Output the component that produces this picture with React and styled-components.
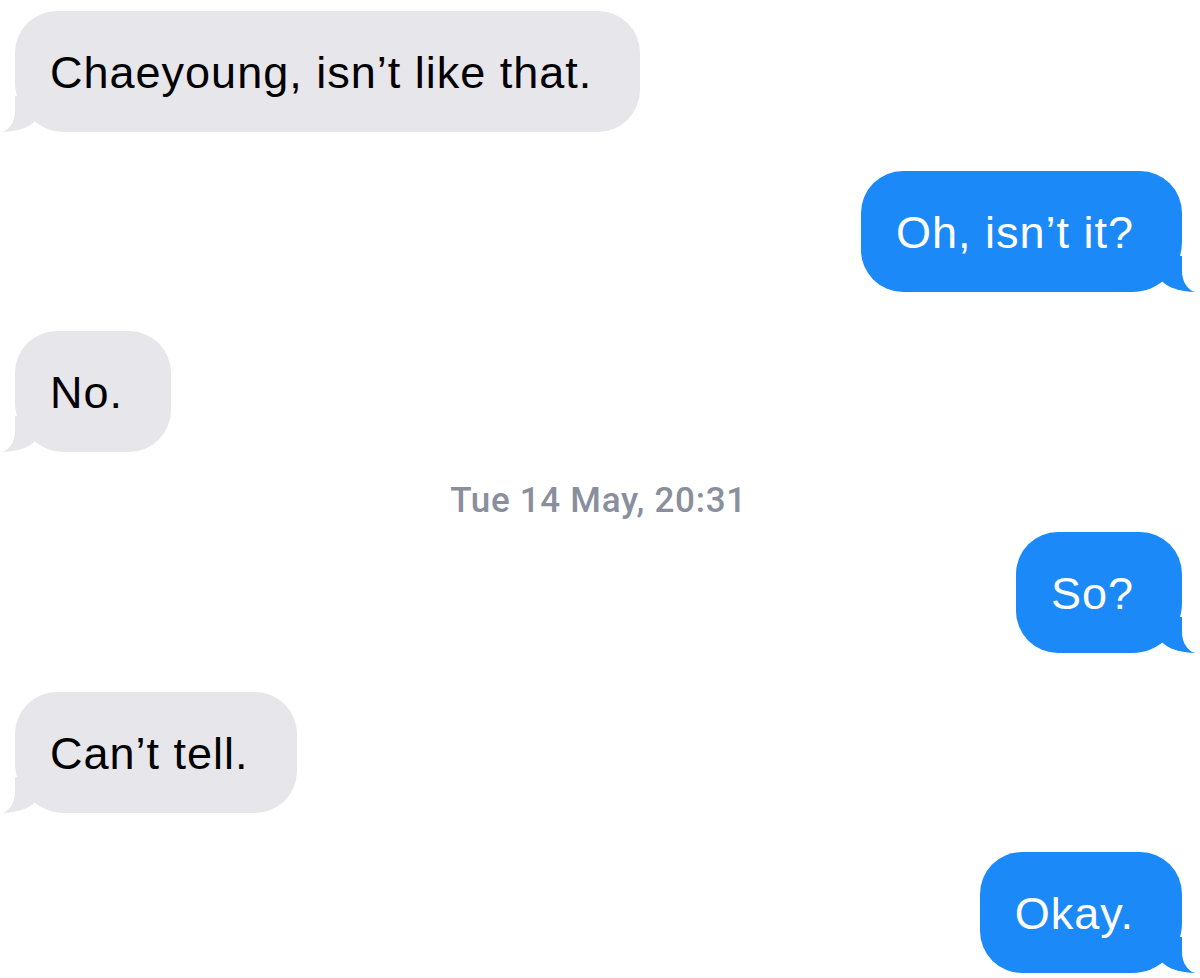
import React from "react";
import styled, { createGlobalStyle, css } from "styled-components";

const GlobalStyle = createGlobalStyle`
  html, body {
    margin: 0;
    padding: 0;
    background: #ffffff;
  }
  body {
    font-family: "Liberation Sans", Arial, sans-serif;
    -webkit-font-smoothing: antialiased;
  }
`;

const BLUE = "#1b8af8";
const GRAY = "#e6e6eb";

const Thread = styled.div`
  display: flex;
  flex-direction: column;
  padding: 11px 18px 0 15px;
  width: 1200px;
  box-sizing: border-box;
`;

const Row = styled.div`
  display: flex;
  justify-content: ${(p) => (p.$me ? "flex-end" : "flex-start")};
  margin-bottom: ${(p) => (p.$tight ? 0 : 39)}px;
`;

const tailRight = css`
  border-bottom-right-radius: 50px;
  &::before {
    content: "";
    position: absolute;
    bottom: 0;
    right: -15px;
    width: 37px;
    height: 36px;
    background: ${BLUE};
    border-bottom-left-radius: 37px 16px;
  }
  &::after {
    content: "";
    position: absolute;
    bottom: 0;
    right: -30px;
    width: 30px;
    height: 36px;
    background: #ffffff;
    border-bottom-left-radius: 15px 21px;
  }
`;

const tailLeft = css`
  border-bottom-left-radius: 50px;
  &::before {
    content: "";
    position: absolute;
    bottom: 0;
    left: -15px;
    width: 37px;
    height: 36px;
    background: ${GRAY};
    border-bottom-right-radius: 37px 16px;
  }
  &::after {
    content: "";
    position: absolute;
    bottom: 0;
    left: -30px;
    width: 30px;
    height: 36px;
    background: #ffffff;
    border-bottom-right-radius: 15px 21px;
  }
`;

const Bubble = styled.div`
  position: relative;
  box-sizing: border-box;
  height: 121px;
  padding: 35px 48px 32px 35px;
  border-radius: 42px;
  background: ${(p) => (p.$me ? BLUE : GRAY)};
  color: ${(p) => (p.$me ? "#ffffff" : "#000000")};
  font-family: "Liberation Sans", Arial, sans-serif;
  font-size: 45px;
  line-height: 54px;
  letter-spacing: 1px;
  white-space: nowrap;
  ${(p) => (p.$me ? tailRight : tailLeft)}
`;

const Text = styled.span`
  position: relative;
  z-index: 1;
`;

const Timestamp = styled.div`
  padding: 29px 0 11px;
  text-align: center;
  font-family: Roboto, "Liberation Sans", Arial, sans-serif;
  font-weight: 500;
  font-size: 35px;
  line-height: 40px;
  letter-spacing: 0.7px;
  color: #8a8f9e;
`;

const messages = [
  { me: false, text: "Chaeyoung, isn’t like that." },
  { me: true, text: "Oh, isn’t it?" },
  { me: false, text: "No.", tight: true },
  { stamp: "Tue 14 May, 20:31" },
  { me: true, text: "So?" },
  { me: false, text: "Can’t tell." },
  { me: true, text: "Okay." },
];

export default function App() {
  return (
    <>
      <GlobalStyle />
      <Thread>
        {messages.map((m, i) =>
          m.stamp ? (
            <Timestamp key={i}>{m.stamp}</Timestamp>
          ) : (
            <Row key={i} $me={m.me} $tight={m.tight}>
              <Bubble $me={m.me}>
                <Text>{m.text}</Text>
              </Bubble>
            </Row>
          )
        )}
      </Thread>
    </>
  );
}
